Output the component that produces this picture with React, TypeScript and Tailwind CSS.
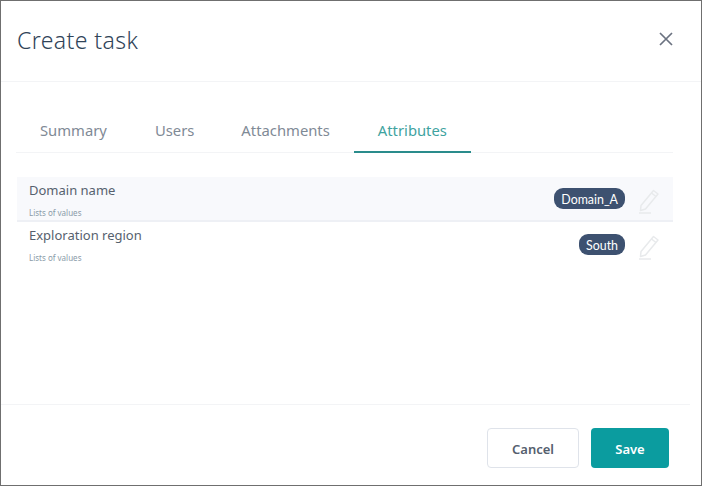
import React from "react";

function Pencil() {
  return (
    <svg width="22" height="26" viewBox="0 0 22 26" fill="none" stroke="#e8eaec" strokeWidth="1.5" className="shrink-0">
      <path d="M3 17.5 15.5 2.5 20 6 7.5 21 2.5 22.5Z" strokeLinejoin="round" />
      <path d="M13.5 5 18 8.5" />
      <path d="M1 25H13" />
    </svg>
  );
}

function Row({ name, value, active, badgeTop }: { name: string; value: string; active?: boolean; badgeTop: string }) {
  return (
    <div className={`flex h-[45px] items-start justify-between pl-3 pr-[13px] ${active ? "border-b-2 border-[#eef0f5] bg-[#f8f9fc]" : ""}`}>
      <div className="flex flex-col">
        <span className="mt-[4px] h-[19px] text-[13px] leading-[19px] text-[#56616e]">{name}</span>
        <span className="mt-[7px] text-[8px] leading-[11px] text-[#8a9ba8]">Lists of values</span>
      </div>
      <div className={`${badgeTop} flex items-start gap-[13px]`}>
        <span className="flex h-[21px] items-center rounded-[9px] bg-[#3d5170] px-[7px] pt-[3px] font-['Lato',sans-serif] text-[12.4px] text-white">{value}</span>
        <Pencil />
      </div>
    </div>
  );
}

export default function App() {
  return (
    <div className="flex h-[486px] w-[702px] flex-col border border-[#6f6f6f] bg-white font-['Noto_Sans','Open_Sans',sans-serif]">
      <header className="flex h-[81px] shrink-0 items-center justify-between border-b border-[#f3f4f6] pl-[16px] pr-[28px]">
        <h1 className="mb-[2px] text-[23px] font-light tracking-[0.4px] text-[#2f4358]">Create task</h1>
        <svg width="14" height="14" viewBox="0 0 14 14" stroke="#6b7280" strokeWidth="1.7" className="mb-[4px]">
          <path d="M1 1 13 13M13 1 1 13" />
        </svg>
      </header>

      <nav className="mx-[15px] mt-[30px] flex h-[41px] w-[657px] shrink-0 border-b border-[#f3f4f6] text-[14.8px] text-[#7f8a96]">
        <span className="h-[41px] px-[24px] leading-[37px]">Summary</span>
        <span className="h-[41px] pl-[24px] pr-[23px] leading-[37px]">Users</span>
        <span className="h-[41px] px-[24px] leading-[37px]">Attachments</span>
        <span className="h-[41px] border-b-2 border-[#2a8c8c] px-[24px] leading-[37px] text-[#3fa39f]">Attributes</span>
      </nav>

      <section className="ml-[16px] mr-[28px] mt-[24px] flex-1">
        <Row name="Domain name" value="Domain_A" badgeTop="mt-[11px]" active />
        <Row name="Exploration region" value="South" badgeTop="mt-[12px]" />
      </section>

      <footer className="mr-[11px] flex h-[81px] shrink-0 items-start justify-end gap-[12px] border-t border-[#f3f4f6] pr-[21px] pt-[23px]">
        <button className="h-[40px] w-[92px] rounded-[4px] border border-[#dfe3ea] bg-white pt-[3px] text-[13px] font-semibold text-[#55606e]">Cancel</button>
        <button className="h-[40px] w-[78px] rounded-[4px] bg-[#0b9c9f] pt-[3px] text-[13px] font-semibold text-white">Save</button>
      </footer>
    </div>
  );
}
